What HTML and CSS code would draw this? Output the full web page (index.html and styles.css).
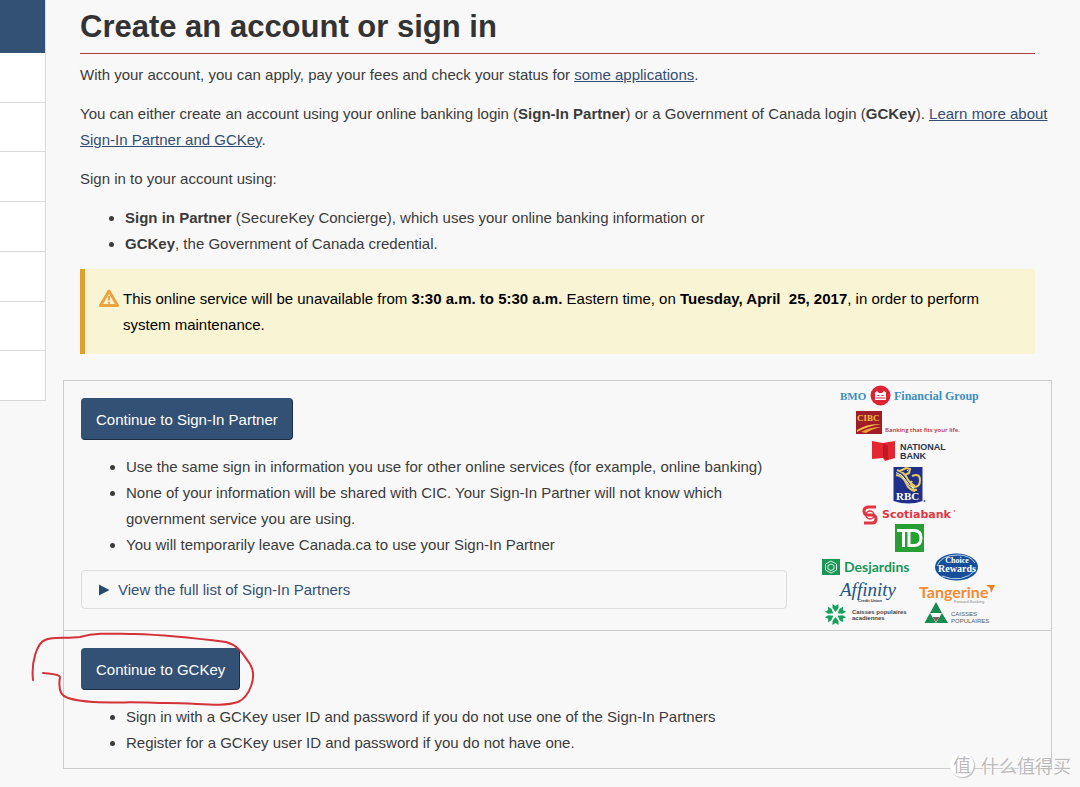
FILE: index.html
```
<!DOCTYPE html>
<html lang="en">
<head>
  <meta charset="UTF-8" />
  <title>Create an account or sign in</title>
  <link rel="stylesheet" href="styles.css">
</head>
<body>
  <div class="page">
    <nav class="side-menu">
      <div class="side-title"></div>
      <ul class="side-list">
        <li></li>
        <li></li>
        <li></li>
        <li></li>
        <li></li>
        <li></li>
        <li></li>
      </ul>
    </nav>

    <main>
      <div class="intro">
        <h1>Create an account or sign in</h1>
        <p>With your account, you can apply, pay your fees and check your status for <a href="#">some applications</a>.</p>
        <p>You can either create an account using your online banking login (<strong>Sign-In Partner</strong>) or a Government of Canada login (<strong>GCKey</strong>). <a href="#">Learn more about Sign-In Partner and GCKey</a>.</p>
        <p>Sign in to your account using:</p>
        <ul>
          <li><strong>Sign in Partner</strong> (SecureKey Concierge), which uses your online banking information or</li>
          <li><strong>GCKey</strong>, the Government of Canada credential.</li>
        </ul>
        <div class="alert">
          <svg class="alert-icon" width="22" height="20" viewBox="0 0 22 20">
            <path d="M11 3L19.500 17.500H2.500Z" fill="none" stroke="#eda33b" stroke-width="3" stroke-linejoin="round"/>
            <path d="M11 8v4.500M11 13.800v2" stroke="#eda33b" stroke-width="2"/>
          </svg>
          <p>This online service will be unavailable from <strong>3:30 a.m. to 5:30 a.m.</strong> Eastern time, on <strong>Tuesday, April &nbsp;25, 2017</strong>, in order to perform system maintenance.</p>
        </div>
      </div>

      <div class="options">
        <section class="option partner">
          <div class="option-text">
            <button type="button">Continue to Sign-In Partner</button>
            <ul>
              <li>Use the same sign in information you use for other online services (for example, online banking)</li>
              <li>None of your information will be shared with CIC. Your Sign-In Partner will not know which government service you are using.</li>
              <li>You will temporarily leave Canada.ca to use your Sign-In Partner</li>
            </ul>
            <details>
              <summary>
                <svg width="12" height="12" viewBox="0 0 12 12"><path d="M1 0.500L11.500 6L1 11.500Z" fill="#284a70"/></svg>
                View the full list of Sign-In Partners
              </summary>
            </details>
          </div>

          <svg class="logos" width="180" height="244" viewBox="0 0 180 244">
            <!-- BMO -->
            <g class="serif" fill="#3a8fc0">
              <text x="20" y="16" font-size="11">BMO</text>
              <text x="74" y="16" font-size="12">Financial Group</text>
            </g>
            <circle cx="60.500" cy="11.500" r="10" fill="#dc2334"/>
            <path d="M55 16V8.500l2-1.500 2 2h3l2-2 2 1.500V16z" fill="#fff"/>
            <path d="M57.500 11.500h2M61.500 11.500h2M56 14h9" stroke="#dc2334"/>

            <!-- CIBC -->
            <rect x="36" y="27" width="26" height="23" fill="#a01c26"/>
            <text class="serif" x="37" y="37" font-size="9" fill="#f5c044">CIBC</text>
            <path d="M37 46Q48 39 61 40Q48 42 37 48Z" fill="#f5c044"/>
            <path d="M41 48Q50 43 61 43Q52 45 46 49Z" fill="#f0a040"/>
            <text class="tagline" x="65" y="48" font-size="6" fill="#b52c3c">Banking that fits your life.</text>

            <!-- National Bank -->
            <path d="M52 57l11 2 12-2v17l-10 3-2-3-11 1z" fill="#e42630"/>
            <path d="M63 59l5 3v14l-5-3z" fill="#bd1823"/>
            <g class="sans" fill="#27364e" font-size="9">
              <text x="80" y="66">NATIONAL</text>
              <text x="80" y="75">BANK</text>
            </g>

            <!-- RBC -->
            <path d="M73.500 83h29v34q-14 5-29 0z" fill="#20308a"/>
            <path d="M76 91q7 1 10 8t9 8M77 86q7 2 10 8t8 8M80 87l6-3 4 1-1 4-4 2M92 92q8-3 8 4t-6 7q-5-2-2-6M90 105l7 1" fill="none" stroke="#e8c95c" stroke-width="2"/>
            <path d="M76 88.500q7 2 10 8t8 8M87 86.500h1" fill="none" stroke="#fff"/>
            <text class="serif" x="76" y="116" font-size="11" fill="#fff">RBC</text>
            <circle cx="104.500" cy="117" r="1" fill="#56609b"/>

            <!-- Scotiabank -->
            <path d="M56 123H49q-5 0-5 4t4 4h4q4 0 4 4t-4 4H44" fill="none" stroke="#e23541" stroke-width="3"/>
            <circle cx="50" cy="131" r="4" fill="none" stroke="#e23541" stroke-width="1.500"/>
            <text class="wide" x="62" y="134" font-size="11" fill="#e23541">Scotiabank</text>
            <circle cx="134.500" cy="127" r="1" fill="#e98188"/>

            <!-- TD -->
            <rect x="75" y="140" width="29" height="28" fill="#26a032"/>
            <path d="M77 146.500h14M83.500 146v17M89 148v13.500h5q7 0 7-7.500t-7-7.500h-6" fill="none" stroke="#fff" stroke-width="3"/>

            <!-- Desjardins -->
            <rect x="2" y="175" width="18" height="16" fill="#189757"/>
            <path d="M11 177l5.500 3v6l-5.500 3-5.500-3v-6zM11 180l3 1.500v3.500l-3 1.500-3-1.500v-3.500z" fill="none" stroke="#d8f0df"/>
            <text class="rounded" x="24" y="188" font-size="14" fill="#189757">Desjardins</text>

            <!-- Choice Rewards -->
            <ellipse cx="136.500" cy="183" rx="21.500" ry="13.500" fill="#174e9a"/>
            <path d="M117 182Q121 171 138 171Q150 171 155 179M122 192Q142 200 156 186" fill="none" stroke="#b6d2ec"/>
            <g class="serif" fill="#fff" text-anchor="middle">
              <text x="137" y="179" font-size="8">Choice</text>
              <text x="137" y="188" font-size="10">Rewards</text>
            </g>

            <!-- Affinity -->
            <text class="script" x="20" y="212" font-size="19" fill="#225486">Affinity</text>
            <text class="sans" x="38" y="218" font-size="4" fill="#333b48">Credit Union</text>

            <!-- Tangerine -->
            <text class="rounded" x="99" y="214" font-size="16" fill="#f38b32">Tangerine</text>
            <path d="M166 201h9l-4 8-1-5z" fill="#f07e24"/>
            <text class="sans light" x="134" y="219" font-size="4" fill="#8d8985">Forward Banking</text>

            <!-- Caisses populaires acadiennes -->
            <g fill="#16a15a">
              <path id="ray" d="M15.500 228l-3-4 0-4 3 2 3-2 0 4z"/>
              <use href="#ray" transform="rotate(60 15.500 230.500)"/>
              <use href="#ray" transform="rotate(120 15.500 230.500)"/>
              <use href="#ray" transform="rotate(180 15.500 230.500)"/>
              <use href="#ray" transform="rotate(240 15.500 230.500)"/>
              <use href="#ray" transform="rotate(300 15.500 230.500)"/>
            </g>
            <g class="sans" fill="#40464c" font-size="6">
              <text x="32" y="230">Caisses populaires</text>
              <text x="32" y="236">acadiennes</text>
            </g>

            <!-- Caisses populaires -->
            <path d="M116 218l6 11h-12zM110 229l6 10h-11.500zM122 229l6 10h-12z" fill="#168c50"/>
            <path d="M112.500 233h7l-3.500 5z" fill="#8a5a57"/>
            <g class="sans light" fill="#55595c" font-size="6">
              <text x="131" y="232">CAISSES</text>
              <text x="131" y="239">POPULAIRES</text>
            </g>
          </svg>
        </section>

        <section class="option gckey">
          <!-- hand-drawn loop around the button -->
          <svg class="scribble" width="226" height="76" viewBox="0 0 226 76">
            <path d="M3 49C1 31 7 12 15 9C24 5 36 8 50 6C68 1 85 3 105 3C140 4 172 8 196 11C210 15 213 24 220 33C228 46 219 66 208 71C190 77 165 71 130 72C98 70 60 74 38 67C30 65 28 58 30 46C29 43 20 43 13 42"/>
          </svg>
          <div class="option-text">
            <button type="button">Continue to GCKey</button>
            <ul>
              <li>Sign in with a GCKey user ID and password if you do not use one of the Sign-In Partners</li>
              <li>Register for a GCKey user ID and password if you do not have one.</li>
            </ul>
          </div>
        </section>
      </div>
    </main>

    <div class="watermark">
      <span class="watermark-badge">值</span>
      <span>什么值得买</span>
    </div>
  </div>
</body>
</html>
```
FILE: styles.css
```
* {
  box-sizing: border-box;
}
body {
  margin: 0;
  background-color: #f8f8f8;
  color: #3b3b3b;
  font-family: "Liberation Sans", Arial, sans-serif;
  font-size: 15px;
  line-height: 26px;
}
.page {
  position: relative;
  display: flex;
  align-items: flex-start;
  min-height: 100vh;
}
a {
  color: #344d70;
}

/* left menu */
.side-menu {
  flex: 0 0 46px;
  border-right: 1px solid #d8d8d8;
}
.side-title {
  height: 53px;
  background-color: #335075;
}
.side-list {
  display: grid;
  grid-template-rows: repeat(7, 1fr);
  height: 348px;
  margin: 0;
  padding: 0;
  list-style: none;
  background-color: #fff;
}
.side-list li {
  border-bottom: 1px solid #d8d8d8;
}

/* content */
main {
  flex: 1;
  min-width: 0;
  padding: 0 28px 18px 17px;
}
.intro {
  padding-left: 17px;
}
h1 {
  margin: 0 17px 8px 0;
  padding: 6px 0;
  border-bottom: 1px solid #af3c43;
  color: #333;
  font-size: 31px;
  line-height: 41px;
}
p {
  margin: 0 0 13px;
}
ul {
  margin: 0 0 12px;
  padding-left: 45px;
}
.alert {
  display: flex;
  gap: 3px;
  margin: 0 17px 26px 0;
  padding: 17px 40px 16px 13px;
  border-left: 5px solid #e0a030;
  background-color: #f9f4d4;
  color: #000;
}
.alert p {
  margin: 0;
}
.alert-icon {
  flex: none;
  margin-top: 2px;
}

/* sign in options */
.options {
  border: 1px solid #ccc;
}
.option {
  position: relative;
  display: flex;
  gap: 33px;
}
.option + .option {
  border-top: 1px solid #ccc;
}
.option-text {
  flex: 1;
  padding: 17px 0 0 17px;
}
.partner {
  padding-right: 51px;
}
.partner .option-text {
  padding-bottom: 21px;
}
button {
  display: block;
  height: 42px;
  margin-bottom: 14px;
  padding: 0 14px;
  border: 1px solid #335075;
  border-right-color: #1c2c43;
  border-bottom-color: #1c2c43;
  border-radius: 4px;
  background-color: #335075;
  color: #fff;
  font-family: inherit;
  font-size: 15px;
  cursor: pointer;
}
details {
  border: 1px solid #ddd;
  border-radius: 4px;
}
summary {
  display: flex;
  align-items: center;
  gap: 8px;
  padding: 6px 16px 5px;
  color: #335075;
  cursor: pointer;
}
.logos {
  flex: none;
  margin-top: 3px;
}
.scribble {
  position: absolute;
  top: 0;
  left: -34px;
  fill: none;
  stroke: #d3323a;
  stroke-width: 2;
  stroke-linecap: round;
  pointer-events: none;
}

/* logo lettering */
.serif {
  font-family: "Liberation Serif", serif;
  font-weight: bold;
}
.sans {
  font-family: "Liberation Sans", sans-serif;
  font-weight: bold;
}
.light {
  font-weight: normal;
}
.tagline {
  font-family: "Open Sans", sans-serif;
  font-weight: 600;
}
.wide {
  font-family: "DejaVu Sans", sans-serif;
  font-weight: bold;
}
.rounded {
  font-family: Lato, sans-serif;
  font-weight: bold;
}
.script {
  font-family: "Liberation Serif", serif;
  font-style: italic;
}

.watermark {
  position: absolute;
  right: 9px;
  bottom: 9px;
  display: flex;
  align-items: center;
  gap: 7px;
  color: #bbb;
  font-family: "Noto Sans CJK SC", sans-serif;
  font-size: 18px;
  text-shadow: -1px -1px #fff;
}
.watermark-badge {
  width: 24px;
  height: 24px;
  border-radius: 50%;
  background-color: #fff;
  box-shadow: 1px 1px 1px #bbb;
  line-height: 23px;
  text-align: center;
}
```
